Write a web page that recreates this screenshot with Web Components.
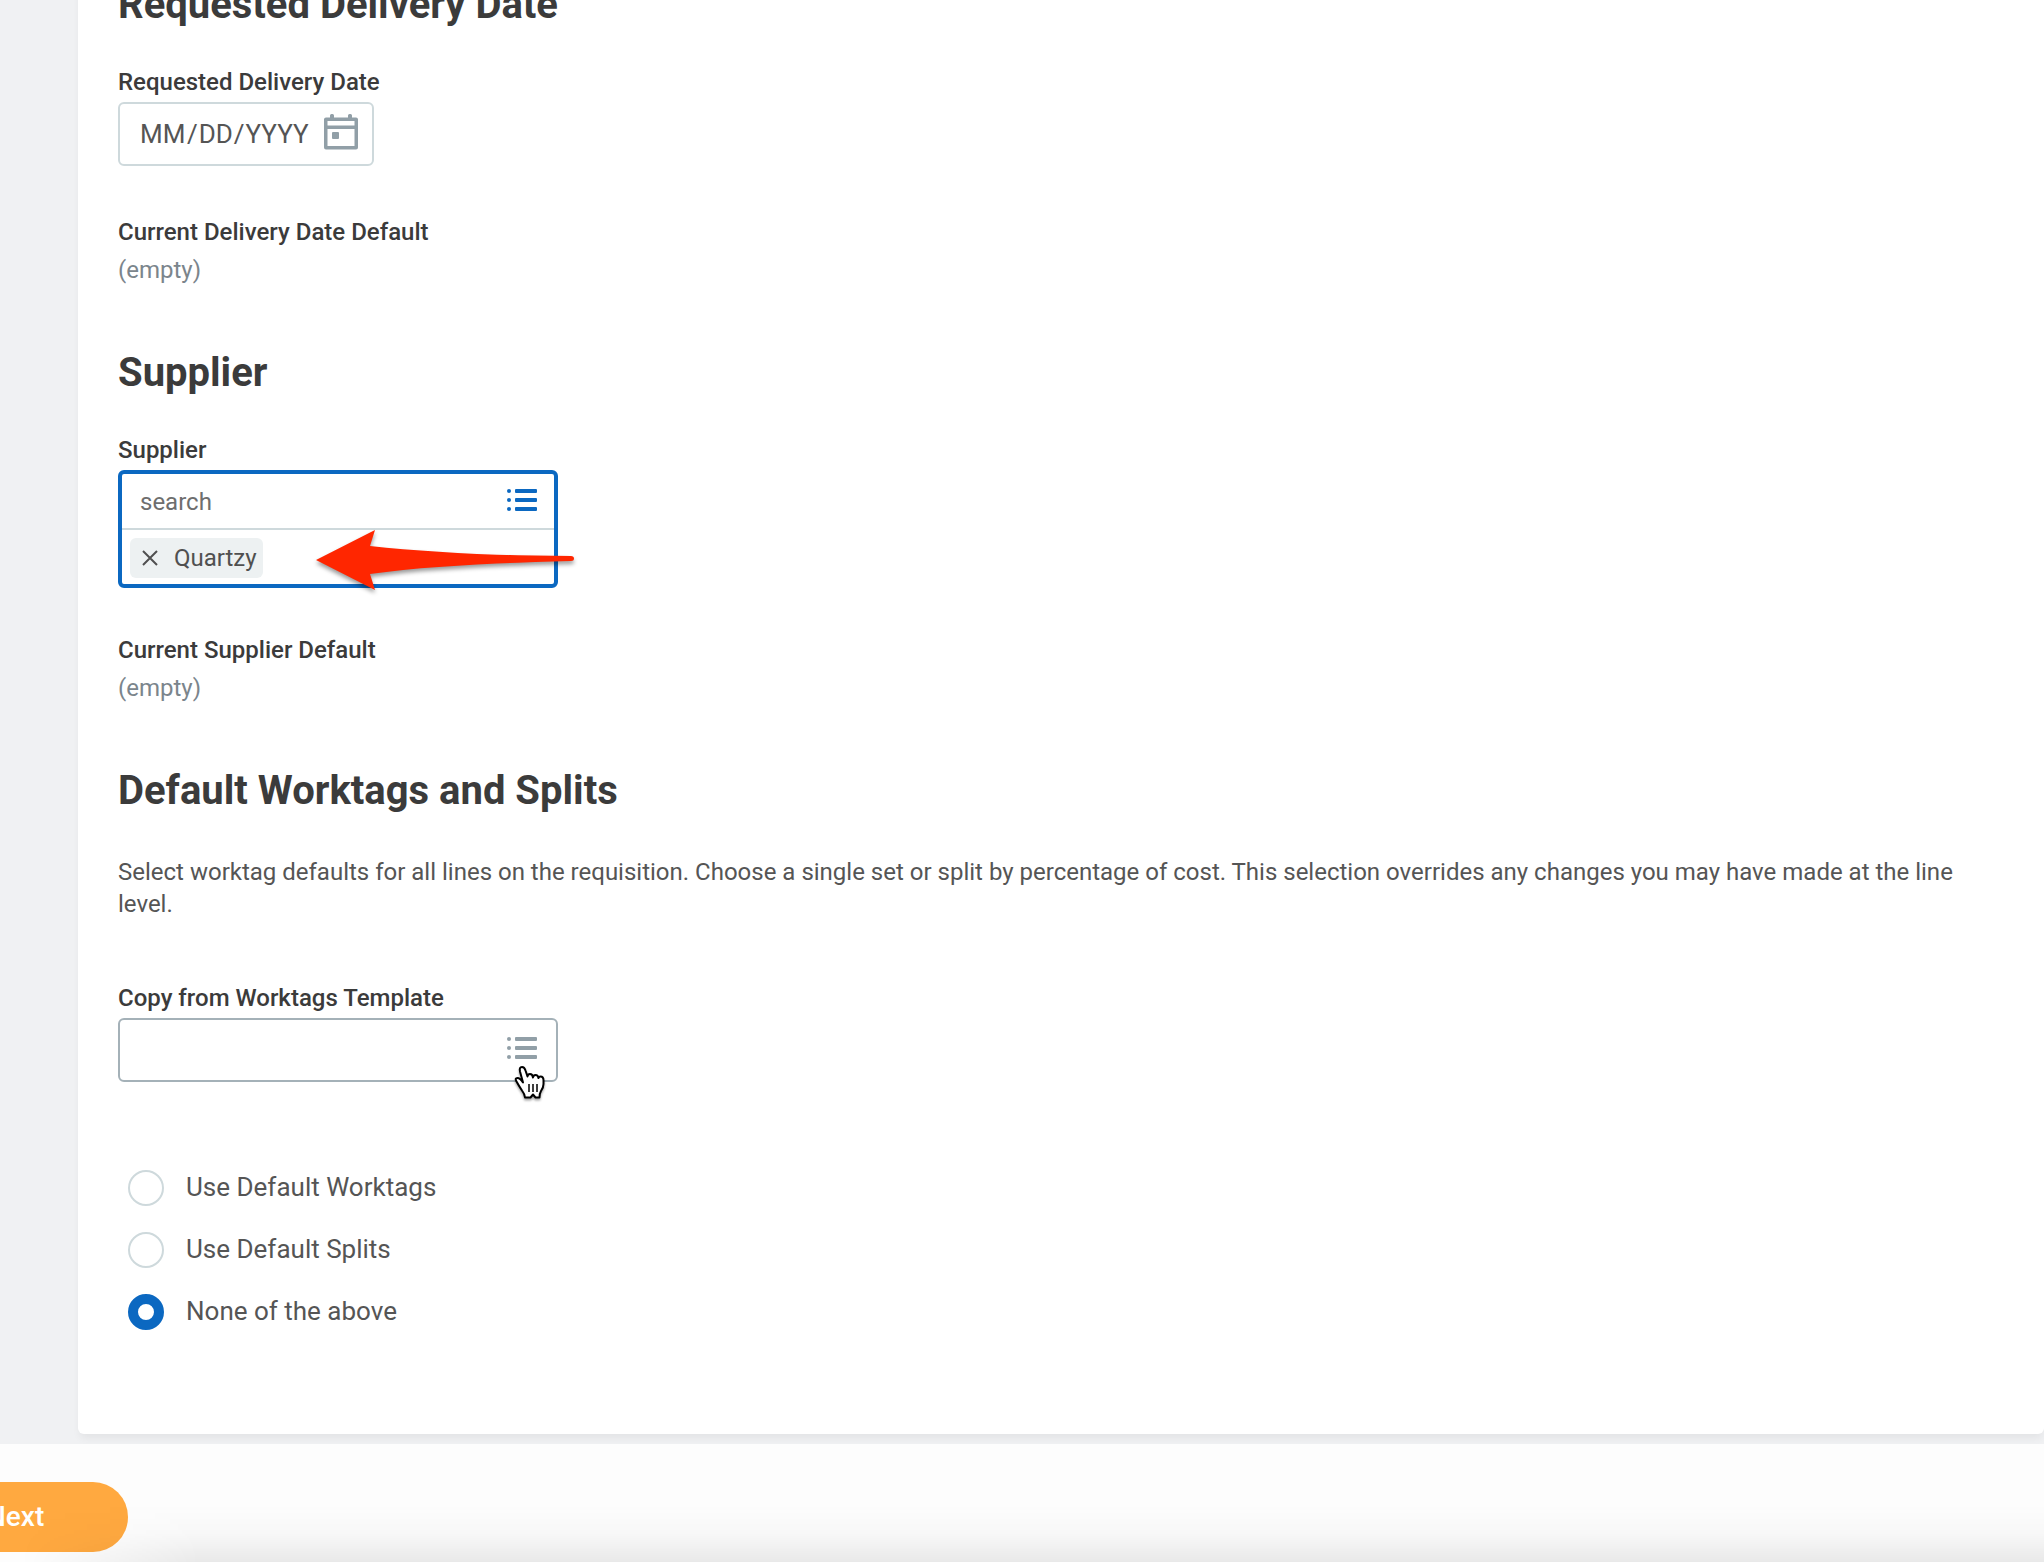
<!DOCTYPE html>
<html lang="en">
<head>
<meta charset="utf-8">
<meta name="viewport" content="width=device-width, initial-scale=1">
<title>Requisition defaults</title>
<style>
  body { margin: 0; background: #f0f1f3; font-family: Roboto, "Liberation Sans", sans-serif; font-size: 24px; line-height: 32px; color: #555; }
</style>
</head>
<body>
<req-page>
  <req-section heading="Requested Delivery Date">
    <date-field label="Requested Delivery Date"></date-field>
    <read-only label="Current Delivery Date Default">(empty)</read-only>
  </req-section>
  <req-section heading="Supplier">
    <prompt-field label="Supplier" placeholder="search" active>Quartzy</prompt-field>
    <read-only label="Current Supplier Default">(empty)</read-only>
  </req-section>
  <req-section heading="Default Worktags and Splits" intro="Select worktag defaults for all lines on the requisition. Choose a single set or split by percentage of cost. This selection overrides any changes you may have made at the line level.">
    <prompt-field label="Copy from Worktags Template" hovered></prompt-field>
    <radio-list></radio-list>
  </req-section>
  <action-bar slot="footer"></action-bar>
</req-page>
<script>
const define = (name, render) => customElements.define(name, class extends HTMLElement {
  connectedCallback() {
    if (this.shadowRoot) return;
    this.attachShadow({ mode: 'open' }).innerHTML = render(this);
  }
});

const labelCss = `
  * { box-sizing: border-box; }
  :host { display: block; }
  .label { display: block; font-weight: 500; color: #3b3b3b; }`;

const listIcon = `<svg width="30" height="24" viewBox="0 0 30 24" fill="currentColor" aria-hidden="true">
  <circle cx="2" cy="3" r="2"/><circle cx="2" cy="12" r="2"/><circle cx="2" cy="21" r="2"/>
  <rect x="8" y="1" width="22" height="4" rx="1"/><rect x="8" y="10" width="22" height="4" rx="1"/><rect x="8" y="19" width="22" height="4" rx="1"/></svg>`;

define('req-page', () => `
  <style>
    :host { display: block; }
    main { overflow: hidden; padding: 0 0 10px 78px; }
    /* The form is scrolled so that its first heading sits partly above the top edge. */
    .card { margin-top: -20px; background: #fff; border-radius: 6px; box-shadow: 0 6px 8px -2px rgba(0, 0, 0, .06); padding: 0 60px 91px 40px; display: flex; flex-direction: column; gap: 62px; }
  </style>
  <main><div class="card"><slot></slot></div></main>
  <slot name="footer"></slot>`);

define('req-section', el => `
  <style>
    :host { display: block; }
    h2 { margin: 0 0 36px; font-size: 40px; line-height: 50px; font-weight: 700; color: #3b3b3b; }
    p { margin: 40px 0 62px; }
  </style>
  <h2>${el.getAttribute('heading')}</h2>
  ${el.hasAttribute('intro') ? `<p>${el.getAttribute('intro')}</p>` : ''}
  <slot></slot>`);

define('read-only', el => `
  <style>${labelCss}
    .value { margin-top: 6px; color: #7b858c; }
  </style>
  <span class="label" id="l">${el.getAttribute('label')}</span>
  <div class="value" aria-labelledby="l"><slot></slot></div>`);

define('date-field', el => `
  <style>${labelCss}
    :host { margin-bottom: 50px; }
    .box { display: flex; align-items: center; justify-content: space-between; width: 256px; height: 64px; margin-top: 4px; padding: 0 14px 4px 20px; border: 2px solid #ced9dc; border-radius: 6px; background: #fff; }
    .parts { display: flex; gap: 1px; padding-top: 3px; font-size: 26px; }
    input { width: 46px; padding: 0; border: 0; outline: 0; background: none; font: inherit; color: #555; }
    .day { width: 34px; }
    .year { width: 64px; }
    input::placeholder { color: #555; opacity: 1; }
    button { display: flex; padding: 0; border: 0; background: none; color: #919fa7; }
  </style>
  <label class="label" for="d">${el.getAttribute('label')}</label>
  <div class="box">
    <div class="parts">
      <input id="d" type="text" placeholder="MM"><span>/</span>
      <input class="day" type="text" placeholder="DD" aria-label="Day"><span>/</span>
      <input class="year" type="text" placeholder="YYYY" aria-label="Year">
    </div>
    <button type="button" aria-label="Calendar">
      <svg width="34" height="36" viewBox="0 0 34 36" aria-hidden="true" fill="currentColor">
        <path fill-rule="evenodd" d="M6 1.500q0-1.500 1.500-1.500h1q1.500 0 1.500 1.500V3.500h14V1.500q0-1.500 1.500-1.500h1q1.500 0 1.500 1.500V3.500h4q2 0 2 2v28q0 2-2 2H2q-2 0-2-2V5.500q0-2 2-2h4zM3.500 7v4.500h27V7zM3.500 15v17h27V15z"/>
        <rect x="8" y="18" width="7" height="7" rx="1"/>
      </svg>
    </button>
  </div>`);

define('prompt-field', el => {
  const value = el.textContent.trim();
  return `
  <style>${labelCss}
    .box { position: relative; width: 440px; margin-top: 4px; border: 2px solid #a4b1b8; border-radius: 6px; background: #fff; }
    .row { display: flex; align-items: center; height: 60px; padding: 0 19px 4px 20px; color: #919fa7; }
    input { flex: 1; min-width: 0; padding: 4px 0 0; border: 0; outline: 0; background: none; font: inherit; color: #666; }
    input::placeholder { color: #6e6e6e; opacity: 1; }
    button { display: flex; align-items: center; padding: 0; border: 0; background: none; color: inherit; }
    :host([active]) { margin-bottom: 46px; }
    :host([active]) .box { border: 4px solid #0b68c1; }
    :host([active]) .row { height: 56px; padding: 0 17px 2px 18px; border-bottom: 2px solid #ced9dc; color: #0b68c1; }
    .picked { display: flex; padding: 8px; height: 54px; }
    .pill { display: flex; align-items: center; gap: 16px; height: 40px; padding: 0 6px 0 12px; border-radius: 6px; background: #edf1f2; color: #505050; }
    .arrow { position: absolute; left: 194px; top: 56px; overflow: visible; filter: drop-shadow(0 3px 2px rgba(0, 0, 0, .4)); pointer-events: none; }
    .hand { position: absolute; left: 393px; top: 45px; overflow: visible; filter: drop-shadow(0 2px 1px rgba(0, 0, 0, .35)); pointer-events: none; }
  </style>
  <label class="label" for="f">${el.getAttribute('label')}</label>
  <div class="box">
    <div class="row">
      <input id="f" type="text" placeholder="${el.getAttribute('placeholder') || ''}">
      <button type="button" aria-label="Open list">${listIcon}</button>
    </div>
    ${value ? `<div class="picked"><span class="pill">
      <button type="button" aria-label="Remove"><svg width="16" height="16" viewBox="0 0 16 16" fill="none" stroke="currentColor" stroke-width="2" aria-hidden="true"><path d="M1 1l14 14M15 1L1 15"/></svg></button><slot></slot></span></div>` : ''}
    ${el.hasAttribute('active') ? `<svg class="arrow" width="258" height="60" viewBox="0 0 258 60" fill="#ff2600" aria-hidden="true"><path d="M0 30L59 0 54 16C110 22 180 26 255 26q3 0 3 2.500 0 2.500-3 2.500C180 33 110 36 54 44L59 60z"/></svg>` : ''}
    ${el.hasAttribute('hovered') ? `<svg class="hand" width="32" height="35" viewBox="0 0 32 35" aria-hidden="true"><path fill="#fff" stroke="#000" stroke-width="2" stroke-linejoin="round" d="M10 17.500L7 6.500Q6 2 9 2 11.500 2 12.500 5.500L14.500 11.500Q14.800 9 17 9 19.500 9 20 12.500 20.300 10 22.500 10 25 10 25.500 13 25.800 11.500 27.500 11.500 30.500 11.500 30.500 15.500V19Q30.500 22.500 28 26 26.500 28.500 26.500 32.500H22.500L20 29.500 17.500 32.500H12Q12 29.500 9 25.500 6 21 3.500 16.500 1.500 13 4.500 13 7 13 10 17.500z"/><path stroke="#000" stroke-width="1.500" d="M16 19v8M20 19v8M24 19v8"/></svg>` : ''}
  </div>`;
});

define('radio-list', () => `
  <style>${labelCss}
    :host { margin-top: 75px; }
    fieldset { margin: 0; padding: 0 0 0 10px; border: 0; }
    label { display: flex; align-items: center; gap: 22px; height: 62px; font-size: 26px; }
    label span { padding-bottom: 2px; }
    input { appearance: none; flex: none; width: 36px; height: 36px; margin: 0; border: 2px solid #ced9dc; border-radius: 50%; background: #fff; }
    input:checked { border: 10px solid #0b68c1; }
  </style>
  <fieldset aria-label="Worktag defaults">
    <label><input type="radio" name="w"><span>Use Default Worktags</span></label>
    <label><input type="radio" name="w"><span>Use Default Splits</span></label>
    <label><input type="radio" name="w" checked><span>None of the above</span></label>
  </fieldset>`);

define('action-bar', () => `
  <style>
    :host { position: relative; display: flex; padding: 38px 0 10px; overflow: hidden; background: #fdfdfd; }
    button { height: 70px; margin-left: -98px; padding: 0 84px; border: 0; border-radius: 35px; background: #ffa940; color: #fff; font: inherit; font-size: 28px; font-weight: 500; }
    .shade { position: absolute; inset: 60px 0 0; pointer-events: none; background: linear-gradient(to bottom, rgba(0, 0, 0, 0), rgba(0, 0, 0, .02) 50%, rgba(0, 0, 0, .08)); mask-image: linear-gradient(to right, transparent 20px, #000 200px); }
  </style>
  <button type="button">Next</button>
  <div class="shade"></div>`);
</script>
</body>
</html>
